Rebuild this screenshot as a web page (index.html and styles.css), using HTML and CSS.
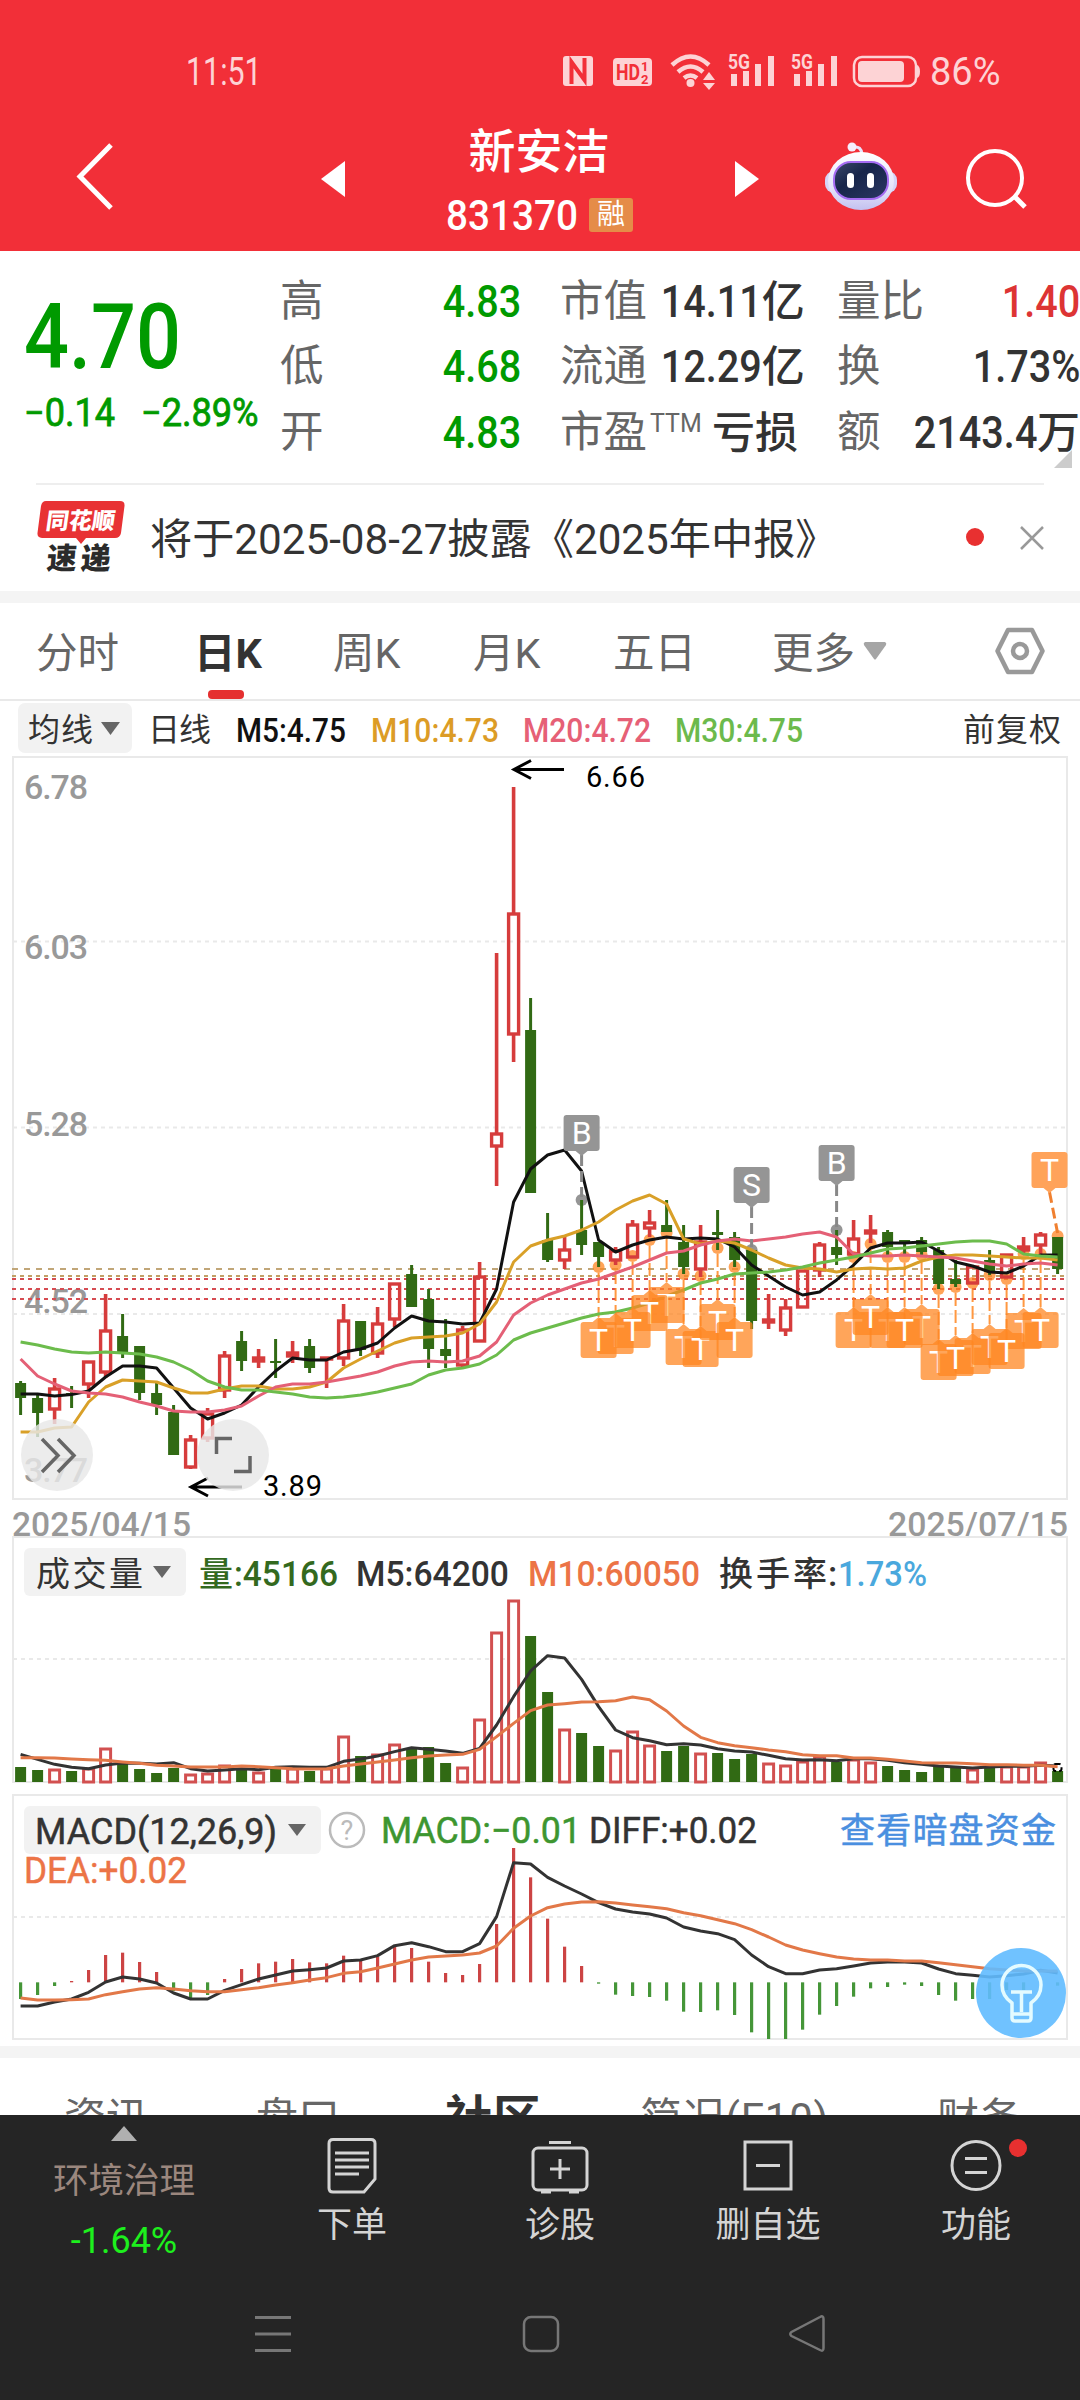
FILE: index.html
```html
<!DOCTYPE html>
<html lang="zh-CN">
<head>
<meta charset="utf-8">
<title>新安洁 831370</title>
<link rel="stylesheet" href="styles.css">
</head>
<body>
<header class="top">
  <div class="status">
    <span class="clock">11:51</span>
    <svg class="sysicons" width="370" height="40" viewBox="560 50 370 40">
      <g fill="#fdd3d5">
        <rect x="563" y="56" width="30" height="30" rx="3"/>
        <rect x="613" y="58" width="39" height="28" rx="4"/>
        <circle cx="690.500" cy="83" r="4"/>
        <path d="M703 80h12l-6-8zM703 83h12l-6 7z"/>
        <path d="M731 74h6v12h-6zM743 71h6v15h-6zM755 64h6v22h-6zM768 56h6v30h-6z"/>
        <path d="M794 74h6v12h-6zM806 71h6v15h-6zM818 64h6v22h-6zM831 56h6v30h-6z"/>
        <rect x="858" y="61" width="46" height="21" rx="4"/>
        <path d="M917 65q3 1 3 6.500t-3 6.500z"/>
        <text x="728" y="69" font-size="20" font-weight="700" textLength="22" lengthAdjust="spacingAndGlyphs">5G</text>
        <text x="791" y="69" font-size="20" font-weight="700" textLength="22" lengthAdjust="spacingAndGlyphs">5G</text>
      </g>
      <g fill="none" stroke="#fdd3d5">
        <path d="M672 65q18.500-17 37 0M678 72q12.500-11 25 0M684 78q6.500-5 13 0" stroke-width="4.500"/>
        <rect x="854" y="57" width="62" height="29" rx="8" stroke-width="2.500"/>
      </g>
      <path d="M571.500 84V62L584.500 80V58" fill="none" stroke="#f22f38" stroke-width="4"/>
      <g fill="#f22f38" font-weight="700">
        <text x="616" y="80" font-size="22" textLength="24" lengthAdjust="spacingAndGlyphs">HD</text>
        <text x="641" y="71" font-size="13">1</text>
        <text x="641" y="84" font-size="13">2</text>
      </g>
    </svg>
    <span class="pct">86%</span>
  </div>
  <div class="titlebar">
    <svg class="back" width="40" height="70" viewBox="0 0 40 70"><path d="M35 4L4 35.500L35 67" fill="none" stroke="#fff" stroke-width="5"/></svg>
    <svg class="prev" width="24" height="36" viewBox="0 0 24 36"><path d="M0 18L24 0V36z" fill="#fff"/></svg>
    <div class="name">
      <h1>新安洁</h1>
      <div class="code"><span class="num codenum">831370</span><span class="badge">融</span></div>
    </div>
    <svg class="next" width="24" height="36" viewBox="0 0 24 36"><path d="M24 18L0 0V36z" fill="#fff"/></svg>
    <svg class="robot" width="74" height="70" viewBox="0 0 74 70">
      <defs>
        <linearGradient id="head" x1="0" y1="0" x2="0" y2="1"><stop offset="0" stop-color="#fff"/><stop offset=".65" stop-color="#e3e2fa"/><stop offset="1" stop-color="#c3c1f0"/></linearGradient>
        <linearGradient id="face" x1="0" y1="0" x2="1" y2="1"><stop offset="0" stop-color="#3c4a6c"/><stop offset=".4" stop-color="#17254a"/><stop offset="1" stop-color="#2b3864"/></linearGradient>
      </defs>
      <path d="M38 12Q37 4 30 5" fill="none" stroke="#e9e3fb" stroke-width="3"/>
      <circle cx="28" cy="5" r="4.500" fill="#f6eefd"/>
      <rect x="1" y="29" width="72" height="22" rx="9" fill="#d6d5f8"/>
      <ellipse cx="37" cy="39" rx="33" ry="29" fill="url(#head)"/>
      <rect x="10" y="20" width="54" height="37" rx="17" fill="url(#face)" stroke="#a56cf2" stroke-width="2"/>
      <rect x="23" y="31" width="7" height="15" rx="3.500" fill="#fff"/><rect x="43" y="31" width="7" height="15" rx="3.500" fill="#fff"/>
    </svg>
    <svg class="search" width="64" height="64" viewBox="0 0 64 64"><circle cx="30" cy="30" r="27" fill="none" stroke="#fff" stroke-width="4"/><path d="M50 49l10 10" stroke="#fff" stroke-width="5"/></svg>
  </div>
</header>

<section class="quote">
  <div class="price">
    <div class="last num">4.70</div>
    <div class="chg"><span class="num">−0.14</span><span class="num">−2.89%</span></div>
  </div>
  <dl class="stats">
    <div><dt>高</dt><dd class="num up">4.83</dd></div>
    <div><dt>市值</dt><dd><span class="num">14.11</span>亿</dd></div>
    <div><dt>量比</dt><dd class="num red">1.40</dd></div>
    <div><dt>低</dt><dd class="num up">4.68</dd></div>
    <div><dt>流通</dt><dd><span class="num">12.29</span>亿</dd></div>
    <div><dt>换</dt><dd class="num">1.73%</dd></div>
    <div><dt>开</dt><dd class="num up">4.83</dd></div>
    <div><dt>市盈<sup>TTM</sup></dt><dd>亏损</dd></div>
    <div><dt>额</dt><dd class="amount"><span class="num">2143.4</span>万</dd></div>
  </dl>
  <i class="corner"></i>
</section>

<section class="news">
  <svg class="logo" width="90" height="74" viewBox="36 500 90 74">
    <path d="M46 501H120q5 0 4.500 5L121 533q-1 5-6 5H86l-5 6-5-6H42q-5 0-4.500-5L41 506q1-5 5-5z" fill="#e83234"/>
    <text transform="translate(45 529) skewX(-8)" font-size="23" font-weight="900" fill="#fff" textLength="69">同花顺</text>
    <text transform="translate(46 569) skewX(-5)" font-size="30" font-weight="900" fill="#2b2b2b" textLength="64">速递</text>
  </svg>
  <p>将于2025-08-27披露《2025年中报》</p>
  <i class="dot"></i>
  <svg class="close" width="24" height="24" viewBox="0 0 24 24"><path d="M1 1L23 23M23 1L1 23" stroke="#999" stroke-width="2.500"/></svg>
</section>

<nav class="periods">
  <span class="t1">分时</span><span class="t2 on">日K</span><span class="t3">周K</span><span class="t4">月K</span><span class="t5">五日</span><span class="t6">更多</span>
  <svg class="tri" width="24" height="18" viewBox="0 0 24 18"><path d="M2 0H22q2 1 1 3L13 17q-1 1-2 0L1 3Q0 1 2 0z" fill="#a5a5a5"/></svg>
  <svg class="hex" width="50" height="48" viewBox="0 0 50 48"><path d="M13 3H37L47.500 24L37 45H13L2.500 24z" fill="none" stroke="#999" stroke-width="4.500" stroke-linejoin="round"/><circle cx="25" cy="24" r="7" fill="none" stroke="#999" stroke-width="4.500"/></svg>
</nav>

<svg class="chart" width="1080" height="835" viewBox="0 701 1080 835">
  <rect x="18" y="703" width="114" height="50" rx="7" fill="#f2f2f2"/>
  <path d="M101 722h19l-9.500 13z" fill="#666"/>
  <g class="cjk" font-size="32" fill="#333">
    <text x="28" y="741" textLength="65">均线</text><text x="148" y="741" textLength="63">日线</text><text x="963" y="741" textLength="98">前复权</text>
  </g>
  <g font-size="33" font-weight="500">
    <text class="fit" x="236" y="741.500" textLength="110" fill="#111">M5:4.75</text>
    <text class="fit" x="371" y="741.500" textLength="128" fill="#dc9c26">M10:4.73</text>
    <text class="fit" x="523" y="741.500" textLength="128" fill="#e66076">M20:4.72</text>
    <text class="fit" x="675" y="741.500" textLength="128" fill="#6cba4c">M30:4.75</text>
  </g>
  <g class="grid"><path d="M13 941.500H1067M13 1127.500H1067M13 1314H1067" stroke-dasharray="4 4"/><rect x="13" y="757" width="1054" height="742"/></g>
  <g font-size="34" fill="#999" font-weight="500">
    <text x="24" y="799" textLength="64">6.78</text><text x="24" y="959" textLength="64">6.03</text><text x="24" y="1136" textLength="64">5.28</text><text x="24" y="1313" textLength="64">4.52</text><text x="24" y="1482" textLength="64">3.77</text>
    <text class="fit" x="12" y="1536" textLength="179">2025/04/15</text><text class="fit" x="888" y="1536" textLength="180">2025/07/15</text>
  </g>
  <g fill="none" stroke-width="2">
    <path d="M12 1269H1067" stroke="#c1a678" stroke-dasharray="6 6"/><path d="M12 1276H1067" stroke="#c1a066" stroke-dasharray="4 4"/>
    <path d="M12 1279H1067M12 1289H1067M12 1299H1067" stroke="#d64c52" stroke-dasharray="4 4"/>
  </g>
  <g id="markdots"></g><g id="candles"></g><g id="averages"></g><g id="marks"></g>
  <g stroke="#000" stroke-width="3" fill="none"><path d="M564 769.500H514M531 760.500L514 769.500L531 778.500M242 1487H191M208 1478L191 1487L208 1496"/></g>
  <g font-size="29" fill="#000"><text x="586" y="787" textLength="59">6.66</text><text x="263" y="1495.500" textLength="59">3.89</text></g>
  <g><circle cx="57" cy="1455" r="36" fill="#e8e8e8" fill-opacity=".82"/><circle cx="233" cy="1455" r="36" fill="#e8e8e8" fill-opacity=".82"/>
  <path d="M42 1439L58 1455.500L42 1472M58 1439L74 1455.500L58 1472M216.500 1454V1438.500H232M250 1456V1471.500H234" fill="none" stroke="#666" stroke-width="3.500"/></g>
</svg>

<svg class="chart" width="1080" height="256" viewBox="0 1536 1080 256">
  <g class="grid"><path d="M13 1659H1067" stroke-dasharray="4 4"/><rect x="13" y="1537" width="1054" height="245"/></g>
  <rect x="24" y="1548" width="162" height="48" rx="6" fill="#f2f2f2"/>
  <path d="M153 1566h18l-9 12z" fill="#666"/>
  <text class="cjk" x="36" y="1586" font-size="34" fill="#333" textLength="107">成交量</text>
  <g font-size="35" font-weight="500">
    <text class="cjk" x="199" y="1586" font-size="34" fill="#33691e">量</text>
    <text class="fit" x="234" y="1585.500" textLength="104" fill="#33691e">:45166</text>
    <text class="fit" x="356" y="1585.500" textLength="153" fill="#333">M5:64200</text>
    <text class="fit" x="528" y="1585.500" textLength="172" fill="#ec7446">M10:60050</text>
    <text class="cjk" x="719" y="1586" font-size="34" textLength="108" fill="#333">换手率</text><text x="828" y="1585.500" fill="#333">:</text>
    <text class="fit" x="838" y="1585.500" textLength="89" fill="#4aa8dd">1.73%</text>
  </g>
  <g id="volume"></g>
</svg>

<svg class="chart" width="1080" height="254" viewBox="0 1792 1080 254">
  <g class="grid"><path d="M13 1917H1067" stroke-dasharray="4 4"/><rect x="13" y="1795" width="1054" height="244"/></g>
  <rect x="24" y="1806" width="297" height="48" rx="6" fill="#f2f2f2"/>
  <path d="M288 1824h18l-9 12z" fill="#666"/>
  <circle cx="347" cy="1830" r="17" fill="none" stroke="#bbb" stroke-width="2.500"/>
  <text x="347" y="1840" font-size="27" fill="#bbb" text-anchor="middle">?</text>
  <g font-size="36" stroke-width=".5">
    <text class="fit" x="35" y="1844" textLength="242" fill="#333" stroke="#333">MACD(12,26,9)</text>
    <text class="fit" x="381" y="1843" textLength="200" fill="#3d9630" stroke="#3d9630">MACD:−0.01</text>
    <text class="fit" x="589" y="1843" textLength="168" fill="#333" stroke="#333">DIFF:+0.02</text>
    <text class="fit" x="24" y="1883" textLength="163" fill="#ec7446" stroke="#ec7446">DEA:+0.02</text>
    <text class="cjk" x="840" y="1843" font-size="35" textLength="216" fill="#4a8fe0" stroke="#4a8fe0">查看暗盘资金</text>
  </g>
  <g id="macd"></g>
  <circle cx="1021" cy="1993" r="45" fill="#60bbff" fill-opacity=".9"/>
  <path d="M1012 2003Q1002 1996 1002 1985A19 19 0 0 1 1041 1985Q1041 1996 1031 2003V2018q0 3-3 3h-13q-3 0-3-3zM1011 1992h21M1021.500 1992v20M1013 2014h17" fill="none" stroke="#e4fbff" stroke-width="3.500" stroke-linejoin="round"/>
</svg>

<nav class="sections">
  <span class="s1">资讯</span><span class="s2">盘口</span><span class="s3 on">社区</span><span class="s4">简况(F10)</span><span class="s5">财务</span>
</nav>

<footer class="bottom">
  <div class="actions">
    <div class="act industry"><i class="uptri"></i><span>环境治理</span><b>-1.64%</b></div>
    <div class="act a2"><svg width="60" height="60" viewBox="0 0 60 60"><path d="M11 4.500H49q4 0 4 4V44L42 57H11q-4 0-4-4V8.500q0-4 4-4z"/><path d="M13 18H47M13 25H47M13 32H47M13 39H37"/></svg><span>下单</span></div>
    <div class="act a3"><svg width="60" height="60" viewBox="0 0 60 60"><rect x="3" y="13" width="54" height="42" rx="5"/><path d="M19 7.500H41M30 24V44M20 34H40M11 57H21M39 57H49"/></svg><span>诊股</span></div>
    <div class="act a4"><svg width="60" height="60" viewBox="0 0 60 60"><rect x="7" y="7" width="46" height="47"/><path d="M18 30.500H42"/></svg><span>删自选</span></div>
    <div class="act a5"><svg width="60" height="60" viewBox="0 0 60 60"><circle cx="30" cy="30.500" r="24"/><path d="M19 23.500H41M19 37.500H41"/></svg><span>功能</span><i class="reddot"></i></div>
  </div>
  <svg class="sysnav" width="1080" height="60" viewBox="0 2304 1080 60"><path d="M255 2317.500H291M255 2334H291M255 2350.500H291" stroke-width="3"/><rect x="524" y="2317" width="34" height="34" rx="7"/><path d="M820 2317Q823.500 2315 823.500 2319V2348Q823.500 2352 820 2350L791.500 2336Q789 2334 791.500 2332z"/></svg>
</footer>
<script src="chart.js"></script>
</body>
</html>
```
FILE: styles.css
```css
* { box-sizing: border-box; margin: 0; padding: 0; }
body { width: 1080px; height: 2400px; overflow: hidden; background: #fff; color: #333; font-family: Roboto, "Noto Sans CJK SC", sans-serif; }
svg { display: block; flex: none; }
.num { display: inline-block; font-family: Roboto, sans-serif; font-weight: 500; transform: scaleX(.88); transform-origin: 100% 50%; white-space: nowrap; }

.top { height: 251px; background: #f22f38; color: #fff; }
.status { display: flex; height: 110px; padding: 50px 0 20px 186px; align-items: center; color: #fdd3d5; font-size: 38px; }
.clock { width: 374px; transform: scaleX(.8); transform-origin: 0 50%; line-height: 40px; padding-top: 4px; }
.pct { line-height: 40px; padding-top: 4px; }
.titlebar { display: flex; height: 141px; padding-left: 76px; align-items: flex-start; }
.back { margin-top: 31px; }
.prev { margin: 51px 0 0 205px; }
.name { width: 390px; height: 130px; }
.name h1 { height: 74px; padding: 11px 2px 0 0; text-align: center; font-size: 47px; line-height: 62px; font-weight: 500; }
.code { display: flex; padding: 14px 0 0 101px; height: 50px; }
.codenum { width: 130px; font-size: 43px; line-height: 34px; transform: scaleX(.9); transform-origin: 0 50%; }
.badge { margin-left: 13px; width: 44px; height: 34px; border-radius: 3px; background: #e58c48; font-size: 28px; line-height: 33px; text-align: center; }
.next { margin-top: 51px; }
.robot { margin: 32px 0 0 65px; }
.search { margin: 38px 0 0 67px; }

.quote { position: relative; display: flex; height: 232px; width: 1080px; }
.price { width: 280px; padding: 39px 0 0 24px; color: #009a00; }
.last { display: block; height: 97px; font-size: 90px; line-height: 96px; transform: scaleX(.88); transform-origin: 0 50%; }
.chg { display: flex; height: 46px; font-size: 38px; line-height: 52px; }
.chg .num { width: 117px; font-weight: 400; -webkit-text-stroke: .8px; transform: scaleX(.95); transform-origin: 0 50%; }
.stats { display: grid; grid-template-columns: 241px 238px 243px; column-gap: 39px; grid-auto-rows: 65.5px; padding-top: 18px; }
.stats div { display: flex; justify-content: space-between; align-items: center; white-space: nowrap; }
.stats dt { color: #666; font-size: 43.500px; line-height: 60px; }
.stats dd { color: #333; font-size: 43px; line-height: 60px; font-weight: 500; }
.stats dd.num, .stats dd .num { font-size: 45px; }
.stats dd .num { transform-origin: 100% 50%; }
.stats .up { color: #009a00; }
.stats .red { color: #dd3434; }
.stats sup { font-size: 25px; line-height: 20px; vertical-align: 15px; margin-left: 3px; font-weight: 400; }
.corner { position: absolute; right: 8px; bottom: 15px; border-left: 18px solid transparent; border-bottom: 18px solid #ccc; }

.news { display: flex; height: 108px; margin: 0 36px; border-top: 2px solid #eee; }
.logo { margin-top: 15px; font-family: "Noto Sans CJK SC", sans-serif; overflow: visible; }
.news p { width: 805px; padding-left: 24px; font-size: 42.200px; line-height: 109px; white-space: nowrap; }
.news .dot { width: 18px; height: 18px; border-radius: 9px; background: #e83030; margin: 43px 0 0 35px; }
.close { margin: 41px 0 0 36px; }

.periods { display: flex; height: 110px; border-top: 12px solid #f4f4f4; border-bottom: 2px solid #e9e9e9; font-size: 41.500px; line-height: 101px; color: #666; white-space: nowrap; }
.periods span { flex: none; }
.t1 { width: 158px; margin-left: 36px; } .t2 { width: 139px; } .t3 { width: 140px; } .t4 { width: 140px; } .t5 { width: 159px; } .t6 { width: 91px; }
.periods .on { color: #333; font-weight: 700; position: relative; }
.periods .on::after { content: ""; position: absolute; left: 14px; bottom: 0; width: 36px; height: 9px; border-radius: 4px; background: #e53030; }
.tri { margin-top: 39px; }
.hex { margin: 24px 0 0 108px; }

.chart { overflow: visible; font-family: Roboto, sans-serif; }
.cjk { font-family: "Noto Sans CJK SC", sans-serif; }
.grid { fill: none; stroke: #e9e9e9; stroke-width: 2; }
.line { fill: none; stroke-width: 3; stroke-linejoin: round; }

.sections { display: flex; height: 69px; border-top: 12px solid #f4f4f4; overflow: hidden; font-size: 42px; line-height: 60px; color: #666; padding: 31px 0 0 64px; white-space: nowrap; }
.sections span { flex: none; }
.s1 { width: 192px; } .s2 { width: 189px; } .s3 { width: 195px; } .s4 { width: 297px; letter-spacing: .8px; }
.sections .on { color: #333; font-weight: 700; font-size: 48px; }

.bottom { height: 285px; background: #252525; color: #d4d4d4; }
.actions { display: flex; height: 189px; }
.act { position: relative; display: flex; flex-direction: column; align-items: center; width: 208px; padding-top: 20px; font-size: 35px; line-height: 52px; white-space: nowrap; }
.act svg { fill: none; stroke: #d4d4d4; stroke-width: 3; }
.act span { padding-top: 5px; }
.industry { width: 248px; padding-top: 11px; }
.industry span { color: #9b877e; line-height: 60px; font-size: 35.500px; padding: 10px 0 0; }
.industry b { color: #1df01d; font-weight: 400; font-size: 36px; line-height: 60px; }
.uptri { border: 13px solid transparent; border-top: 0; border-bottom: 15px solid #b0b0b0; }
.reddot { position: absolute; left: 137px; top: 24px; width: 18px; height: 18px; border-radius: 9px; background: #e83030; }
.sysnav { fill: none; stroke: #777; stroke-width: 2.500; }
```
FILE: chart.js
```js
const NS = 'http://www.w3.org/2000/svg';
const X = i => 20.6 + 17 * i;
const add = (id, tag, attrs, text) => {
  const e = document.createElementNS(NS, tag);
  for (const k in attrs) e.setAttribute(k, attrs[k]);
  if (text) e.textContent = text;
  document.getElementById(id).appendChild(e);
};
document.querySelectorAll('.fit').forEach(t => t.setAttribute('lengthAdjust', 'spacingAndGlyphs'));

// direction (1 rise, 0 fall), high, low, body top, body bottom
const candles = [
[0,1381,1415,1383,1398],[0,1395,1437,1398,1413],[1,1378,1424,1389,1409],[0,1386,1408,1393,1395],[1,1362,1398,1362,1384],[1,1294,1378,1331,1372],[0,1314,1358,1336,1353],[0,1346,1400,1346,1393],[0,1383,1415,1393,1405],[0,1405,1455,1412,1455],
[1,1435,1469,1440,1467],[1,1408,1442,1414,1438],[1,1351,1398,1356,1390],[0,1331,1371,1341,1361],[1,1349,1368,1358,1361],[0,1339,1378,1361,1363],[1,1341,1363,1353,1356],[0,1339,1373,1346,1368],[1,1357,1388,1358,1359],[1,1304,1366,1321,1358],
[0,1321,1356,1321,1350],[1,1307,1358,1324,1353],[1,1283,1327,1284,1319],[0,1265,1307,1274,1307],[0,1289,1368,1299,1349],[0,1319,1368,1349,1356],[1,1326,1367,1330,1365],[1,1262,1341,1277,1341],[1,953,1186,1134,1146],[1,787,1062,914,1034],
[0,998,1193,1030,1193],[0,1213,1262,1240,1260],[1,1237,1269,1250,1260],[0,1200,1255,1230,1245],[0,1242,1267,1242,1257],[1,1247,1265,1251,1260],[1,1220,1258,1225,1257],[1,1210,1237,1223,1228],[0,1200,1232,1225,1232],[0,1225,1274,1242,1267],
[1,1225,1277,1242,1269],[0,1210,1250,1232,1235],[0,1232,1267,1237,1260],[0,1250,1329,1250,1321],[1,1294,1329,1320,1322],[1,1299,1336,1308,1330],[1,1270,1308,1271,1307],[1,1242,1277,1245,1270],[0,1230,1265,1247,1255],[1,1220,1255,1239,1254],
[1,1215,1243,1231,1233],[0,1230,1255,1232,1247],[0,1240,1255,1240,1242],[0,1237,1255,1240,1252],[0,1247,1289,1250,1284],[0,1260,1287,1279,1284],[1,1265,1283,1267,1283],[0,1250,1275,1260,1272],[1,1254,1278,1255,1277],[1,1237,1253,1247,1250],[1,1232,1255,1235,1245],[0,1237,1274,1237,1269]];
const RED = '#d63c3c', GREEN = '#316a14';
candles.forEach(([up, hi, lo, t, b], i) => {
  const c = up ? RED : GREEN, x = X(i);
  if (up) {
    add('candles', 'path', {d: `M${x} ${hi}V${t}M${x} ${b}V${lo}`, stroke: c, 'stroke-width': 3.6});
    add('candles', 'rect', {x: x - 5, y: t, width: 10, height: Math.max(1, b - t), fill: 'none', stroke: c, 'stroke-width': 3.4});
  } else {
    add('candles', 'path', {d: `M${x} ${hi}V${lo}`, stroke: c, 'stroke-width': 3});
    add('candles', 'rect', {x: x - 5.5, y: t, width: 11, height: b - t, fill: c});
  }
});

const line = (id, ys, color, f = v => v) =>
  add(id, 'polyline', {class: 'line', stroke: color, points: ys.map((y, i) => X(i) + ',' + f(y)).join(' ')});

line('averages', [1394,1394,1396,1394.5,1391,1377,1366,1366,1368,1388,1408,1419,1413,1405,1387,1371,1358,1360,1360,1352,1349,1343,1328,1316,1321,1322,1324,1323,1289,1202,1169,1155,1150,1171,1240,1252,1245,1240,1237,1239,1238,1239,1247,1265,1276,1287,1295,1292,1280,1265,1248,1243,1243,1242,1251,1262,1266,1272,1273,1266,1255,1255], '#111');
line('averages', [1432,1432,1428,1427,1402,1387,1380,1381,1382,1388,1393,1393,1389,1386,1386,1389,1389,1387,1382,1368,1359,1351,1343,1338,1337,1336,1333,1324,1302,1262,1246,1240,1236,1230,1222,1210,1201,1195,1204,1239,1244,1241,1243,1250,1258,1265,1268,1269,1272,1269,1268,1269,1268,1261,1257,1255,1255,1256,1257,1258,1258,1260], '#d9a028');
line('averages', [1359,1376,1384,1391,1393,1394,1397,1402,1406,1411,1412,1412,1410,1406,1396,1387,1384,1384,1382,1379,1376,1372,1366,1362,1361,1362,1361,1356,1342,1315,1303,1295,1289,1283,1279,1273,1267,1260,1253,1251,1245,1241,1239,1241,1239,1237,1234,1232,1237,1254,1256,1256,1255,1256,1257,1258,1261,1264,1266,1264,1263,1265], '#e46076');
line('averages', [1342,1345,1349,1352,1353,1352,1353,1354,1357,1362,1370,1381,1387,1390,1390,1392,1394,1397,1398,1397,1395,1392,1388,1384,1375,1370,1368,1364,1355,1340,1333,1328,1323,1318,1314,1312,1308,1303,1296,1290,1283,1279,1274,1273,1272,1270,1267,1263,1260,1257,1253,1249,1248,1246,1244,1242,1241,1241,1244,1254,1256,1257], '#6cbc4c');

// trade marks: candle index, label top, dot centre
const trades = [[35,1318,1265],[38,1287,1233],[37,1295,1240],[39,1329,1274],[49,1312,1257],[51,1312,1257],[53,1309,1255],[54,1344,1289],[56,1338,1283],[57,1329,1275],[59,1313,1254],
[34,1322,1267],[36,1312,1256],[40,1331,1276],[41,1304,1248],[42,1322,1267],[50,1299,1244],[52,1312,1257],[55,1340,1287],[58,1333,1279],[60,1312,1254]];
const OR = '#ff8620';
trades.forEach(([i, y, d]) => {
  const x = X(i);
  add('markdots', 'circle', {cx: x, cy: d, r: 6, fill: OR, 'fill-opacity': .75});
  add('markdots', 'path', {d: `M${x} ${d + 6}V${y - 5}`, stroke: OR, 'stroke-width': 2, 'stroke-dasharray': '13 4', 'stroke-opacity': .85});
  add('marks', 'path', {d: `M${x - 15} ${y}h9l6-5l6 5h9q3 0 3 3v30q0 3-3 3h-30q-3 0-3-3v-30q0-3 3-3z`, fill: OR, 'fill-opacity': .74});
  add('marks', 'text', {x, y: y + 29, 'font-size': 32, 'text-anchor': 'middle', fill: '#fff'}, 'T');
});
[['B', 33, 1115, 1200], ['S', 43, 1167, 1250], ['B', 48, 1145, 1230], ['T', 61, 1152, 1236]].forEach(([s, i, y, d]) => {
  const t = s === 'T', x = t ? 1049.5 : X(i), fill = t ? '#ffa35a' : '#959595';
  add('markdots', 'circle', {cx: X(i), cy: d, r: 6, fill});
  add('marks', 'path', {d: `M${x} ${y + 40}L${X(i)} ${d - 3}`, stroke: t ? '#f08030' : '#888', 'stroke-width': 3, 'stroke-dasharray': '11 5'});
  add('marks', 'path', {d: `M${x - 15} ${y}h30q3 0 3 3v30q0 3-3 3h-9l-6 5l-6-5h-9q-3 0-3-3v-30q0-3 3-3z`, fill});
  add('marks', 'text', {x, y: y + 29, 'font-size': 32, 'text-anchor': 'middle', fill: '#fff'}, s);
});

const volume = [15,12,12,11,13,33,19,13,9,14,7,8,16,13,9,13,13,11,13,45,26,27,37,33,35,19,14,62,149,181,146,90,52,49,36,31,50,36,31,36,28,29,23,28,18,16,20,25,20,22,19,16,12,10,17,15,12,14,15,15,19,11];
volume.forEach((h, i) => {
  if (candles[i][0]) add('volume', 'rect', {x: X(i) - 5, y: 1782 - h, width: 10, height: h, fill: '#fff', stroke: '#d25050', 'stroke-width': 3});
  else add('volume', 'rect', {x: X(i) - 5.5, y: 1782 - h, width: 11, height: h, fill: GREEN});
});
const vy = v => 1490 + v / 3;
line('volume', [793,808,823,832,836,825,819,820,822,818,836,843,840,836,839,832,830,832,832,814,807,798,785,773,778,783,790,775,705,620,543,497,504,568,650,720,743,752,764,761,765,776,783,786,796,806,810,809,812,806,806,811,818,823,828,831,834,831,829,829,826,828], '#333', vy);
add('volume', 'rect', {x: 1053.5, y: 1764, width: 8, height: 7, rx: 2, fill: '#fff', stroke: '#000', 'stroke-width': 2, 'stroke-dasharray': '5 3'});
line('volume', [803,803,804,807,809,811,816,820,826,828,831,831,831,828,830,833,836,837,836,828,822,816,810,803,798,795,793,778,740,700,662,645,641,636,635,632,621,629,663,708,742,758,767,773,780,785,794,797,797,804,804,808,813,818,819,819,821,824,824,826,826,830], '#e27848', vy);

const macd = [627,615,588,573,540,495,488,516,546,603,624,615,567,537,520,515,507,517,520,497,513,500,470,474,515,549,555,522,402,174,262,386,470,528,581,614,618,621,632,665,666,661,675,727,747,747,719,674,648,620,595,591,584,588,615,632,627,627,600,600,577,587];
const my = v => 1790 + v / 3;
macd.forEach((v, i) => add('macd', 'path', {d: `M${X(i)} ${my(577)}V${my(v)}`, stroke: v < 577 ? '#cc4444' : '#459638', 'stroke-width': 3.2}));
line('macd', [648,648,636,627,607,576,561,567,579,609,627,627,601,584,567,555,543,539,534,513,510,497,467,458,470,485,485,461,380,218,222,262,288,312,338,357,366,372,384,411,423,431,449,495,530,551,551,540,536,528,519,516,516,519,537,551,556,561,557,552,541,549], '#333', my);
line('macd', [624,630,630,629,627,614,605,597,593,597,602,605,605,599,593,585,578,570,563,550,545,534,522,510,501,498,495,489,468,415,378,353,342,336,335,339,345,350,356,368,377,389,401,419,441,465,480,491,501,507,510,510,513,513,518,524,530,536,540,543,543,543], '#e27848', my);
```
